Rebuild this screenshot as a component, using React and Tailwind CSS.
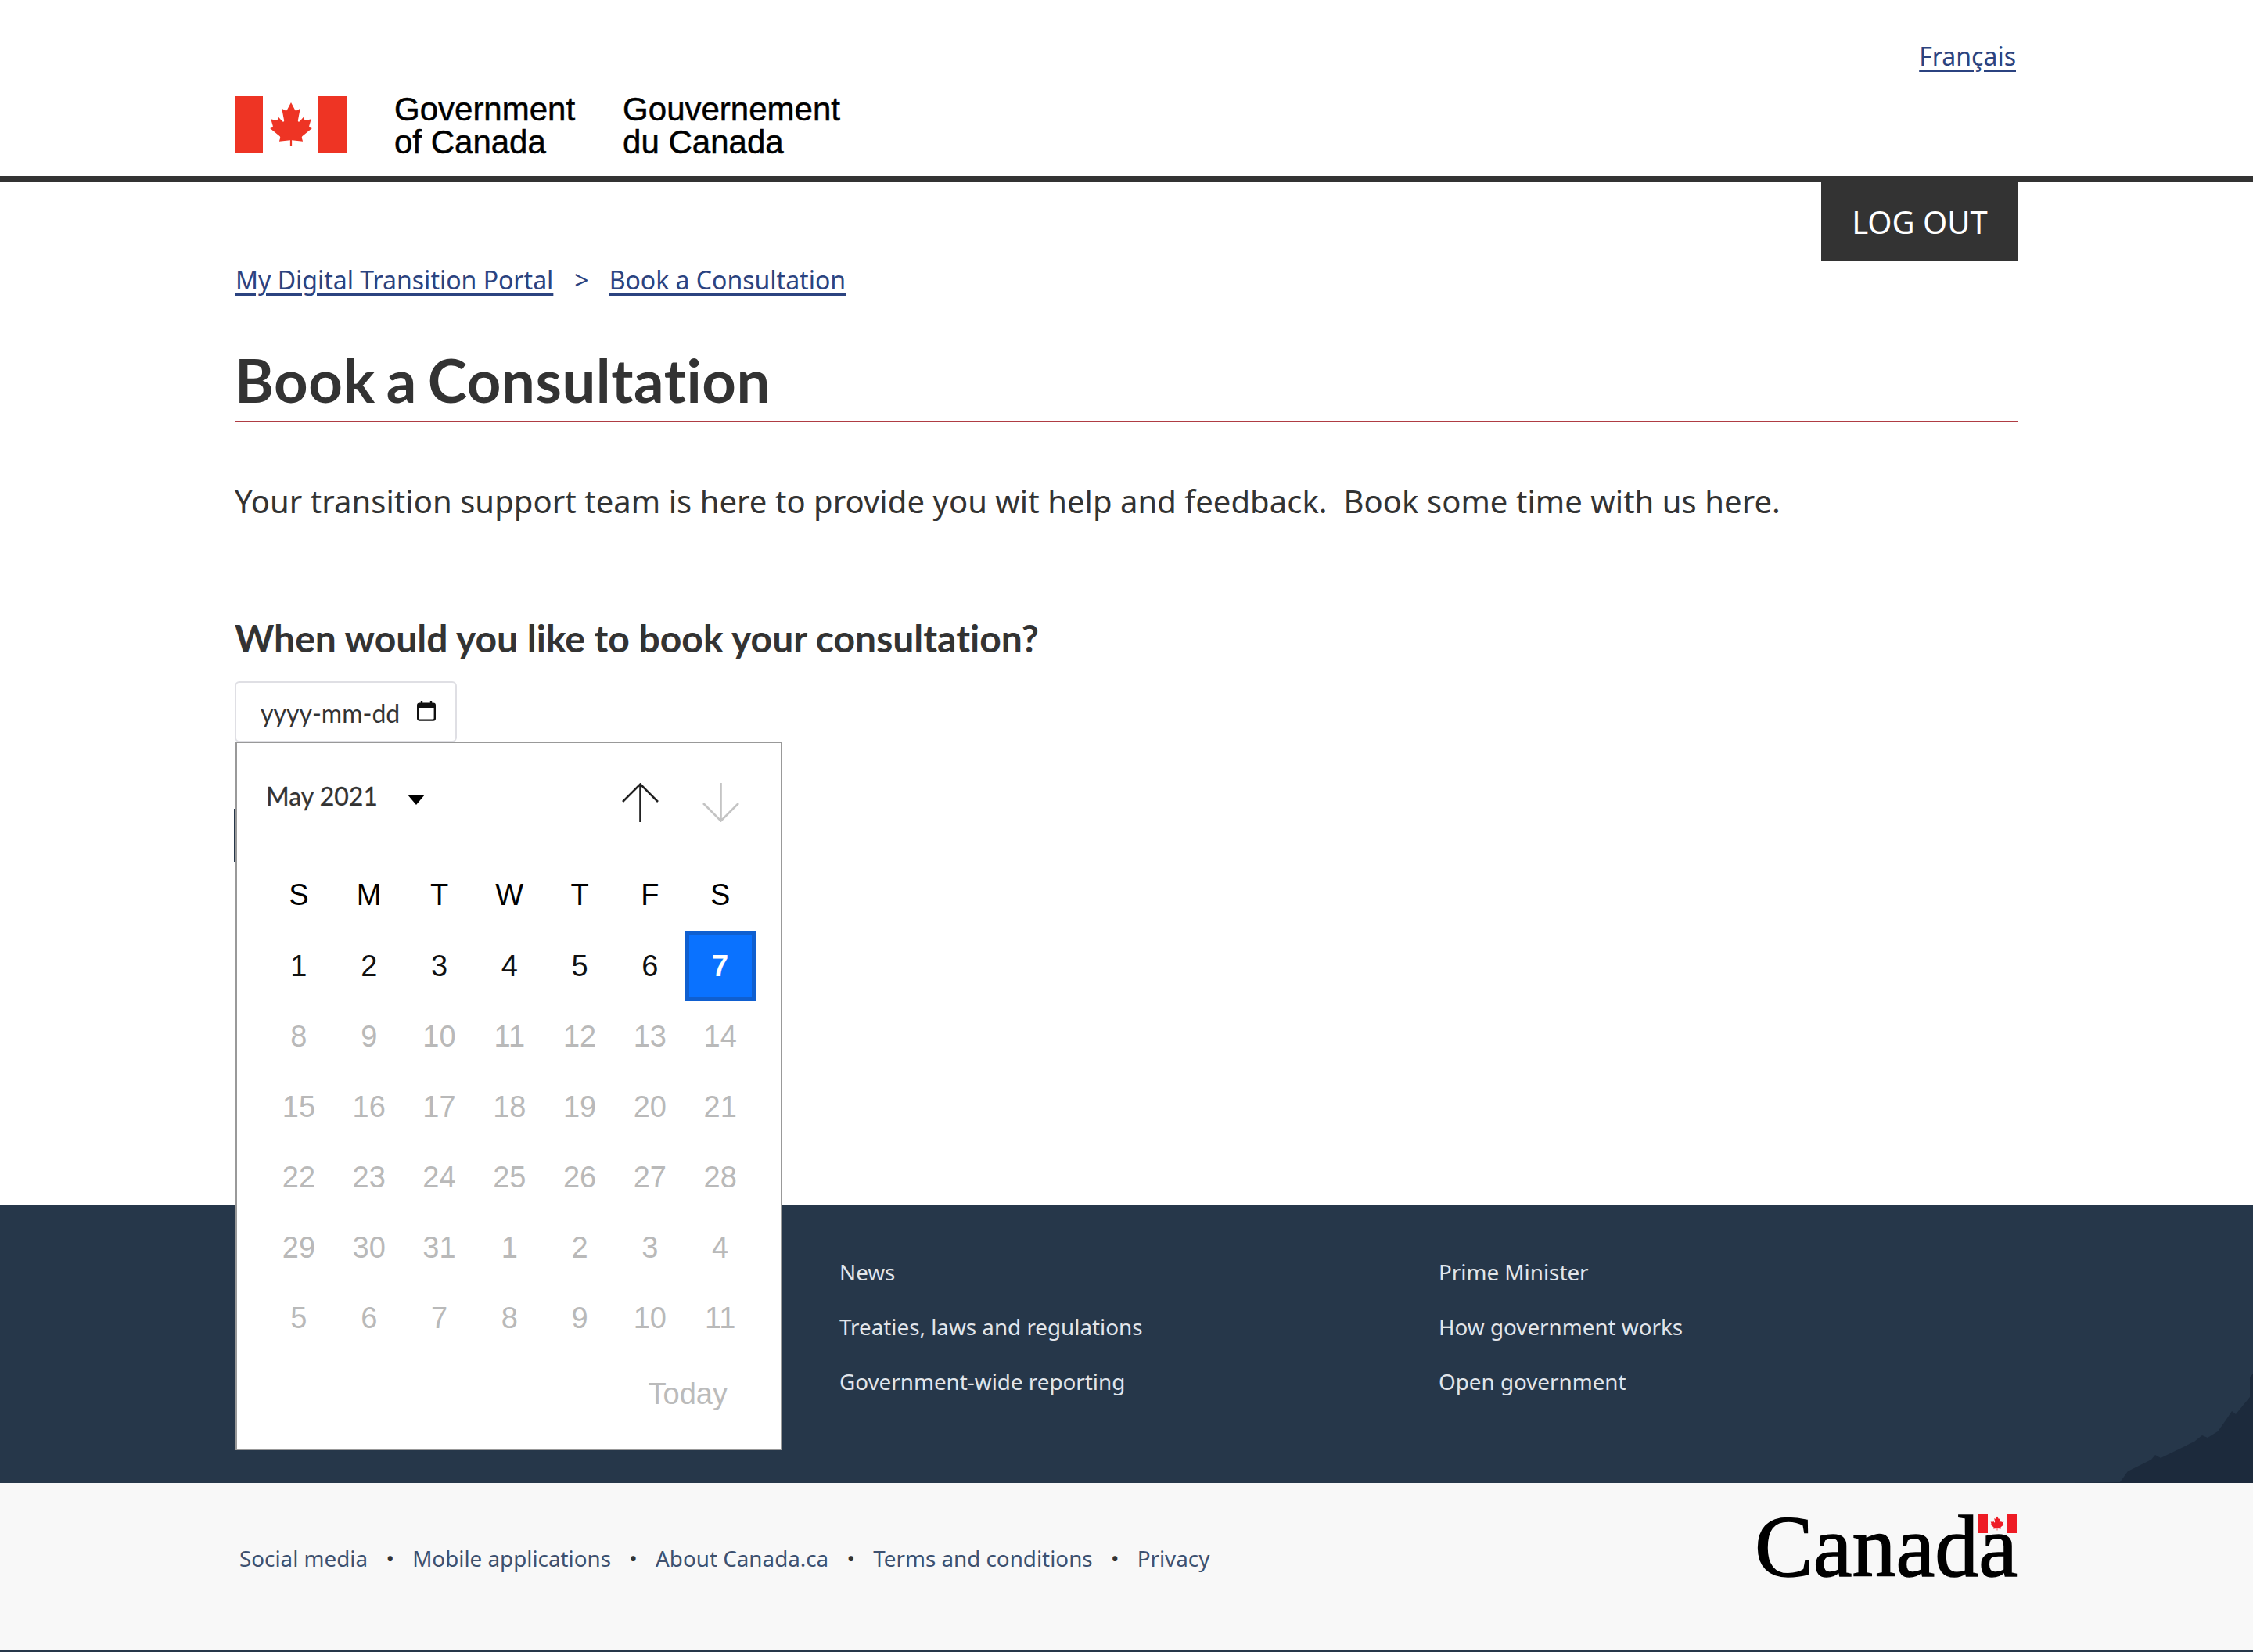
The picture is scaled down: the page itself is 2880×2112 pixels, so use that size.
import React from 'react';

const LEAF = 'M50 0 L41 17 C40 19 38 19 36 18 L29 14 L34 40 C35 44 32 45 30 43 L21 33 L19 40 C19 41 18 41 16 41 L4 38 L8 52 C9 55 9 56 7 57 L2 59 L24 77 C25 78 26 80 25 82 L23 89 L48 86 V100 H52 V86 L77 89 L75 82 C74 80 75 78 76 77 L98 59 L93 57 C91 56 91 55 92 52 L96 38 L84 41 C82 41 81 41 81 40 L79 33 L70 43 C68 45 65 44 66 40 L71 14 L64 18 C62 19 60 19 59 17 Z';

const WEEKDAYS = ['S', 'M', 'T', 'W', 'T', 'F', 'S'];
const WEEKS = [
    [1, 2, 3, 4, 5, 6, 7],
    [8, 9, 10, 11, 12, 13, 14],
    [15, 16, 17, 18, 19, 20, 21],
    [22, 23, 24, 25, 26, 27, 28],
    [29, 30, 31, 1, 2, 3, 4],
    [5, 6, 7, 8, 9, 10, 11],
];
const FOOTER_COLS = [
    ['News', 'Treaties, laws and regulations', 'Government-wide reporting'],
    ['Prime Minister', 'How government works', 'Open government'],
];
const FOOTER_LINKS = ['Social media', 'Mobile applications', 'About Canada.ca', 'Terms and conditions', 'Privacy'];

const Arrow = ({ up, className }) => (
    <svg viewBox="0 0 47 50" className={`w-[47px] h-[50px] ${className}`} fill="none" stroke="currentColor" strokeWidth="2.6">
        {up
            ? <path d="M23.5 50V1.5M1 24L23.5 1.5L46 24" />
            : <path d="M23.5 0V48.5M1 26L23.5 48.5L46 26" />}
    </svg>
);

const DatePopup = () => (
    <div className="absolute left-[1px] top-[77px] z-10 w-[699px] h-[906px] bg-white border-2 border-[#999999] font-['Liberation_Sans',sans-serif]">
        <div className="flex items-start h-[150px] pl-[37px]">
            <span className="mt-[48px] text-[32px] leading-[40px] text-[#333333] font-['Lato',sans-serif] [-webkit-text-stroke:0.3px_#333333]">May 2021</span>
            <span className="mt-[66px] ml-[38px] w-0 h-0 border-x-[11.5px] border-x-transparent border-t-[13px] border-t-black" />
            <Arrow up className="mt-[51px] ml-[252px] text-[#222222]" />
            <Arrow className="mt-[51px] ml-[56px] text-[#c4c4c4]" />
        </div>
        <div className="grid grid-cols-[repeat(7,89.8px)] pl-[34px]">
            {WEEKDAYS.map((d, i) => (
                <div key={i} className="h-[90px] pb-[2px] flex items-center justify-center text-[38px] text-black">{d}</div>
            ))}
            {WEEKS.map((week, w) => week.map((d, i) => {
                const selected = w === 0 && i === 6;
                const enabled = w === 0;
                return (
                    <div
                        key={`${w}-${i}`}
                        className={`h-[90px] flex items-center justify-center text-[38px] ${selected ? 'bg-[#0a72ff] border-[5px] border-[#0f5fd0] text-white font-bold' : enabled ? 'text-[#111111]' : 'text-[#b9b9b9]'}`}
                    >
                        {d}
                    </div>
                );
            }))}
        </div>
        <div className="flex justify-end pr-[68px] mt-[27px] text-[38px] leading-[50px] text-[#bbbbbb]">Today</div>
    </div>
);

export default function App() {
    return (
        <div className="relative w-[2880px] h-[2112px] overflow-hidden bg-white font-['Noto_Sans',sans-serif] flex flex-col">
            <header className="h-[233px] flex-none border-b-[8px] border-[#333333]">
                <div className="w-[2280px] mx-auto h-full relative flex items-end pb-[30px]">
                    <a className="absolute right-[3px] top-[50px] text-[32px] leading-[44px] text-[#2b4380] underline underline-offset-[5px]">Français</a>
                    <div className="flex items-center h-[72px] w-[143px] bg-[#ee3424] justify-center">
                        <div className="w-[71px] h-full bg-white flex items-center justify-center">
                            <svg viewBox="0 0 100 100" className="w-[56px] h-[60px]"><path d={LEAF} fill="#ee3424" /></svg>
                        </div>
                    </div>
                    <div className="ml-[61px] mb-[-8px] text-[42px] leading-[42px] text-black font-['Liberation_Sans',sans-serif] [-webkit-text-stroke:0.5px_black]">Government<br />of Canada</div>
                    <div className="ml-[61px] mb-[-8px] text-[42px] leading-[42px] text-black font-['Liberation_Sans',sans-serif] [-webkit-text-stroke:0.5px_black]">Gouvernement<br />du Canada</div>
                </div>
            </header>

            <main className="relative w-[2280px] mx-auto h-[1308px] flex-none">
                <div className="flex justify-end">
                    <button className="w-[252px] h-[101px] bg-[#333333] text-white text-[40px] uppercase">Log out</button>
                </div>
                <nav className="mt-[2px] flex items-center text-[32px] leading-[44px] text-[#2b4380]">
                    <a className="ml-[1px] underline underline-offset-[5px]">My Digital Transition Portal</a>
                    <span className="ml-[27px]">&gt;</span>
                    <a className="ml-[26px] underline underline-offset-[5px]">Book a Consultation</a>
                </nav>
                <h1 className="mt-[61px] h-[95px] text-[76px] leading-[90px] font-bold text-[#333333] font-['Lato',sans-serif] tracking-[0.55px] [font-variant-ligatures:none] [word-spacing:-5px]">Book a Consultation</h1>
                <div className="mt-[2px] h-[2px] bg-[#af3c43]" />
                <p className="mt-[71px] text-[40px] leading-[60px] text-[#333333] tracking-[0.05px]">Your transition support team is here to provide you wit help and feedback.&nbsp; Book some time with us here.</p>
                <h2 className="mt-[115px] text-[48px] leading-[60px] font-bold text-[#333333] font-['Lato',sans-serif] [font-variant-ligatures:none]">When would you like to book your consultation?</h2>
                <div className="relative mt-[25px]">
                    <div className="w-[284px] h-[78px] pt-[3px] bg-white border-2 border-[#dfdfe4] rounded-[6px] flex items-center pl-[31px] text-[32px] text-[#333333] font-['Lato',sans-serif]">
                        <span>yyyy-mm-dd</span>
                        <svg viewBox="0 0 24 26" className="ml-[22px] mb-[6px] w-[24px] h-[26px]" fill="none" stroke="#111111" strokeWidth="2.4">
                            <rect x="1.2" y="3.6" width="21.6" height="21" rx="2" />
                            <path d="M1.2 6.5H22.8" strokeWidth="5" />
                            <path d="M6 0V3M18 0V3" />
                        </svg>
                    </div>
                    <div className="absolute left-[-1px] top-[163px] w-[3px] h-[68px] bg-[#26374a]" />
                    <DatePopup />
                </div>
            </main>

            <footer className="relative h-[355px] flex-none bg-[#26374a] overflow-hidden">
                <svg viewBox="0 0 230 140" className="absolute right-0 bottom-0 w-[230px] h-[140px]" fill="#1c2a3c">
                    <path d="M0 140 L60 139 L70 125 L100 110 L105 104 L112 108 L155 87 L165 79 L172 82 L185 74 L195 60 L203 48 L208 52 L226 30 L226 5 L230 0 V140 Z" />
                </svg>
                <div className="relative w-[2280px] mx-auto flex pt-[67px] pl-[773px] text-[27.8px] leading-[36px] text-[#e1e5ea]">
                    {FOOTER_COLS.map((col, i) => (
                        <ul key={i} className="flex-none w-[766px] flex flex-col gap-[34px]">
                            {col.map((item) => <li key={item}>{item}</li>)}
                        </ul>
                    ))}
                </div>
            </footer>

            <div className="flex-1 bg-[#f8f8f8] border-b-[3px] border-[#26374a]">
                <div className="w-[2280px] mx-auto h-full flex items-start justify-between">
                    <ul className="mt-[78px] ml-[6px] flex items-center text-[27.8px] leading-[36px] text-[#3d5170]">
                        {FOOTER_LINKS.map((item, i) => (
                            <li key={item} className="flex items-center">
                                {i > 0 && <span className="mx-[21px] w-[15px] text-center text-[#333333]">•</span>}
                                {item}
                            </li>
                        ))}
                    </ul>
                    <div className="relative mt-[39px] w-[334px] h-[80px]">
                        <span className="absolute left-[-3px] bottom-[-18px] text-[112px] leading-[112px] text-black font-['Liberation_Serif',serif] [-webkit-text-stroke:1.5px_black]">Canada</span>
                        <div className="absolute right-[2px] top-0 w-[50px] h-[25px] bg-[#ee1c25] flex justify-center">
                            <div className="w-[25px] h-full bg-[#f8f8f8] flex items-center justify-center">
                                <svg viewBox="0 0 100 100" className="w-[18px] h-[19px]"><path d={LEAF} fill="#ee1c25" /></svg>
                            </div>
                        </div>
                    </div>
                </div>
            </div>
        </div>
    );
}
